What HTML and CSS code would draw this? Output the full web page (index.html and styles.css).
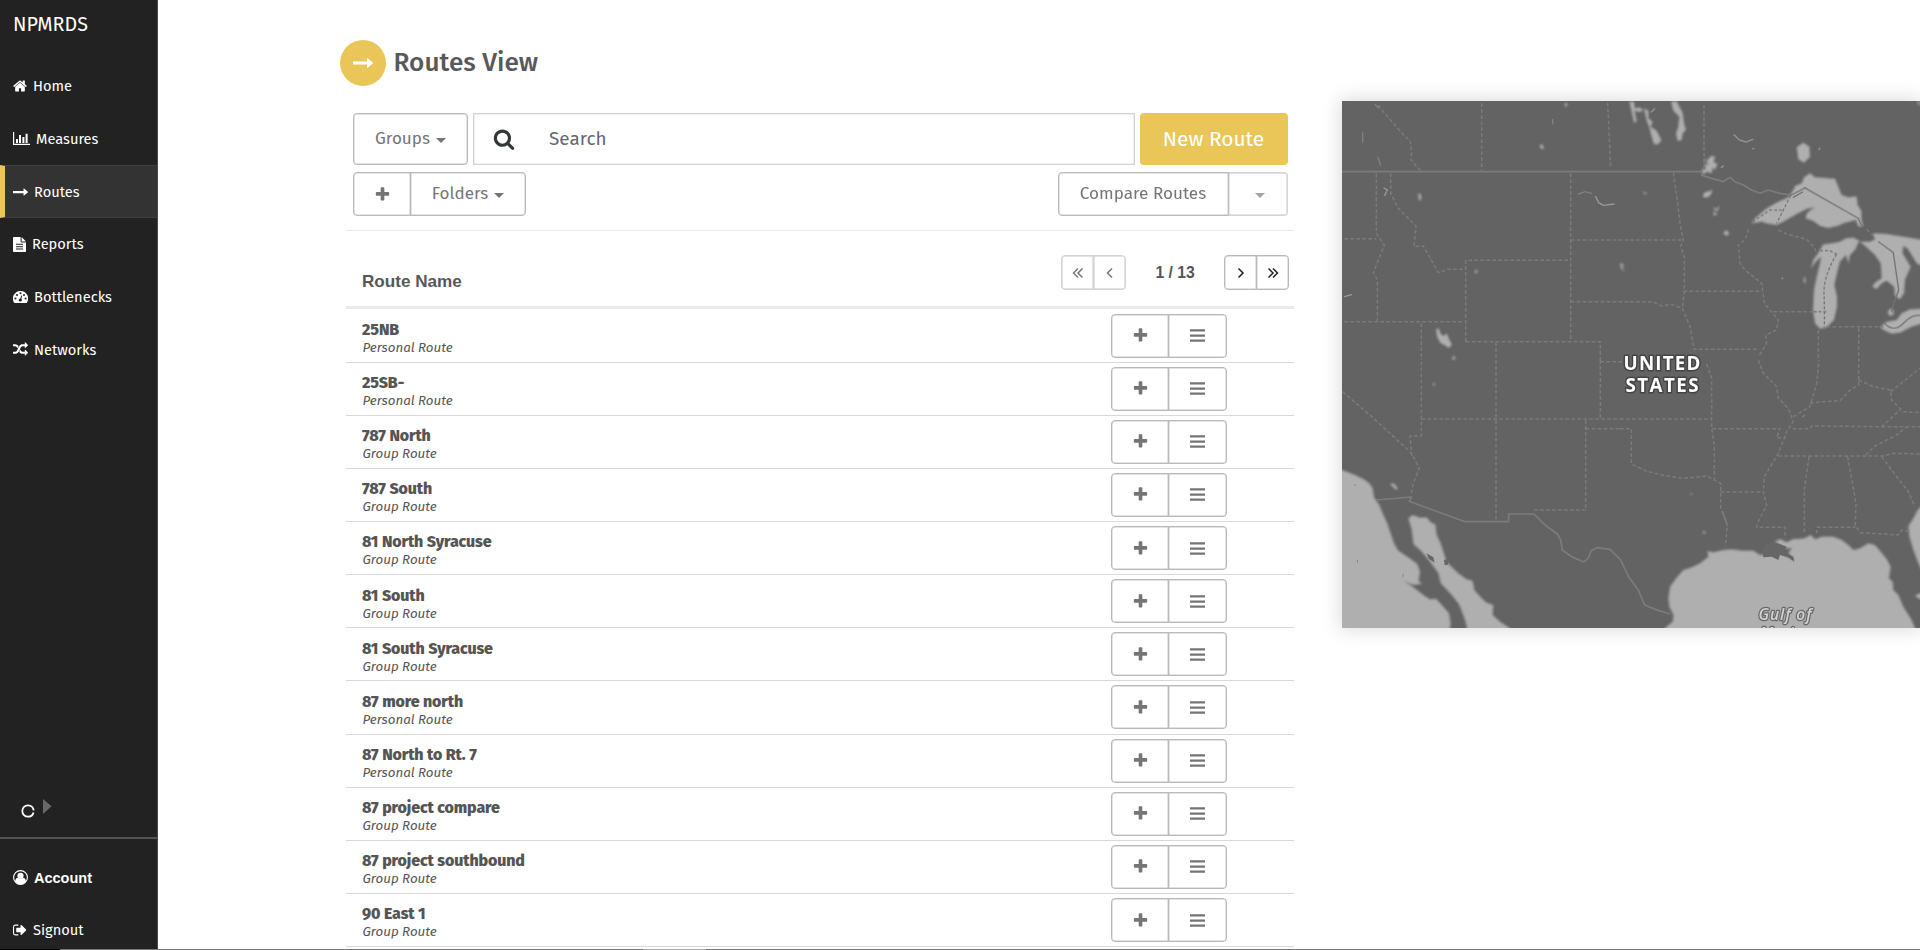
FILE: index.html
```html
<!DOCTYPE html>
<html lang="en">
<head>
<meta charset="utf-8">
<title>NPMRDS – Routes View</title>
<link rel="stylesheet" href="styles.css">
</head>
<body>
<svg class="defs" width="0" height="0">
  <symbol id="plus" viewBox="0 0 1792 1792"><path d="M1600 736v192q0 40-28 68t-68 28h-416v416q0 40-28 68t-68 28h-192q-40 0-68-28t-28-68v-416h-416q-40 0-68-28t-28-68v-192q0-40 28-68t68-28h416v-416q0-40 28-68t68-28h192q40 0 68 28t28 68v416h416q40 0 68 28t28 68z"/></symbol>
  <symbol id="bars" viewBox="0 0 15 13"><path d="M0 .2h15v2.3H0zM0 5.4h15v2.3H0zM0 10.5h15v2.3H0z"/></symbol>
  <symbol id="arrow" viewBox="0 0 20 10"><path d="M0 3.500h14V.7q0-.9.8-.4l5 4.2q.4.5 0 1l-5 4.2q-.8.5-.8-.4V6.500H0z"/></symbol>
</svg>
<div class="app">
  <nav class="sidebar">
    <div class="brand">NPMRDS</div>
    <a class="item"><svg width="14" height="14" viewBox="64 64 1664 1664"><path d="M1472 992v480q0 26-19 45t-45 19h-384v-384h-256v384h-384q-26 0-45-19t-19-45v-480q0-1 .5-3t.5-3l575-474 575 474q1 2 1 6zm223-69l-62 74q-8 9-21 11h-3q-13 0-21-7l-692-577-692 577q-12 8-24 7-13-2-21-11l-62-74q-8-10-7-23.500t11-21.500l719-599q32-26 76-26t76 26l244 204v-195q0-14 9-23t23-9h192q14 0 23 9t9 23v408l219 182q10 8 11 21.500t-7 23.500z"/></svg><span>Home</span></a>
    <a class="item"><svg width="17" height="13" viewBox="0 0 17 13"><path d="M0 0h1.2v11.8H17V13H0zM3 7h2v4H3zM6 3h2v8H6zM9.400 5h2v6h-2zM12.600 1.800h2V11h-2z"/></svg><span>Measures</span></a>
    <a class="item active"><svg width="15" height="8" viewBox="0 0 20 10"><use href="#arrow"/></svg><span>Routes</span></a>
    <a class="item"><svg width="13" height="15" viewBox="0 0 13 15"><path fill-rule="evenodd" d="M0 .8Q0 0 .8 0H7.600V4.600Q7.600 5.400 8.400 5.400H13V14.200q0 .8-.8.8H.8q-.8 0-.8-.8zM3 6.800h7v1H3zM3 9.200h7v1H3zM3 11.600h7v1H3zM8.600 0l4.400 4.400H8.600z"/></svg><span>Reports</span></a>
    <a class="item"><svg width="15" height="12" viewBox="0 0 15 12"><path d="M7.500 0A7.500 7.500 0 0 0 1 11.400q.3.600 1 .600h11q.7 0 1-.600A7.500 7.500 0 0 0 7.500 0z"/><g fill="#222"><circle cx="2.400" cy="7.500" r="1"/><circle cx="4" cy="3.900" r="1"/><circle cx="7.500" cy="2.300" r="1"/><circle cx="11" cy="3.900" r="1"/><circle cx="12.600" cy="7.500" r="1"/><circle cx="7.300" cy="9" r="1.600"/><path d="M8.300 4.400l.9.200L8 9 6.900 8.700z"/></g></svg><span>Bottlenecks</span></a>
    <a class="item"><svg width="15" height="15" viewBox="0 0 1792 1792"><path d="M666 481q-60 92-137 273-22-45-37-72.500t-40.500-63.500-51-56.500-63-35-81.500-14.500h-224q-14 0-23-9t-9-23v-192q0-14 9-23t23-9h224q250 0 410 225zm1126 799q0 14-9 23l-320 320q-9 9-23 9-13 0-22.500-9.500t-9.500-22.500v-192q-32 0-85 .5t-81 1-73-1-71-5-64-10.500-63-18.500-58-28.500-59-40-55-53.500-56-69.500q59-93 136-273 22 45 37 72.500t40.500 63.500 51 56.500 63 35 81.500 14.500h256v-192q0-14 9-23t23-9q12 0 24 10l319 319q9 9 9 23zm0-896q0 14-9 23l-320 320q-9 9-23 9-13 0-22.500-9.500t-9.500-22.500v-192h-256q-48 0-87 15t-69 45-51 61.500-45 77.500q-32 62-78 171-29 66-49.500 111t-54 105-64 100-74 83-90 68.500-106.500 42-128 16.500h-224q-14 0-23-9t-9-23v-192q0-14 9-23t23-9h224q48 0 87-15t69-45 51-61.500 45-77.500q32-62 78-171 29-66 49.500-111t54-105 64-100 74-83 90-68.500 106.500-42 128-16.500h256v-192q0-14 9-23t23-9q12 0 24 10l319 319q9 9 9 23z"/></svg><span>Networks</span></a>
    <div class="side-foot">
      <div class="loader"><svg width="32" height="22" viewBox="0 0 32 22"><circle cx="7" cy="14" r="5.700" fill="none" stroke="#fff" stroke-width="1.800" stroke-dasharray="32.800 3" stroke-dashoffset="-1.500"/><path fill="#686868" d="M22 2l8.500 7.300L22 17z"/></svg></div>
      <a class="item account"><svg width="15" height="15" viewBox="0 0 15 15"><circle cx="7.500" cy="7.500" r="6.900" fill="none" stroke="#fff" stroke-width="1.100"/><circle cx="7.500" cy="5.800" r="3.100"/><path d="M2 11.500Q2.500 8 4.800 7.800q2.700 2.300 5.400 0Q12.500 8 13 11.500 10.800 14.600 7.500 14.600T2 11.500z"/></svg><span>Account</span></a>
      <a class="item"><svg width="14" height="14" viewBox="64 64 1664 1664"><path d="M704 1440q0 4 1 20t.5 26.500-3 23.500-10 19.500-20.500 6.500h-320q-119 0-203.500-84.500t-84.500-203.500v-704q0-119 84.500-203.500t203.500-84.500h320q13 0 22.500 9.500t9.500 22.500q0 4 1 20t.5 26.500-3 23.500-10 19.500-20.500 6.500h-320q-66 0-113 47t-47 113v704q0 66 47 113t113 47h312l11.500 1 11.500 3 8 5.500 7 9 2 13.500zm928-544q0 26-19 45l-544 544q-19 19-45 19t-45-19-19-45v-288h-448q-26 0-45-19t-19-45v-384q0-26 19-45t45-19h448v-288q0-26 19-45t45-19 45 19l544 544q19 19 19 45z"/></svg><span>Signout</span></a>
    </div>
  </nav>

  <main class="content">
    <header class="title"><span class="badge"><svg width="20" height="10"><use href="#arrow"/></svg></span><h1>Routes View</h1></header>
    <div class="tools">
      <div class="tool-row first">
        <button class="btn groups"><span>Groups</span><i class="caret"></i></button>
        <div class="search"><svg width="22" height="22" viewBox="0 0 1792 1792"><path d="M1216 832q0-185-131.500-316.500t-316.500-131.500-316.500 131.500-131.500 316.500 131.500 316.500 316.500 131.500 316.500-131.500 131.500-316.500zm512 832q0 52-38 90t-90 38q-54 0-90-38l-343-342q-179 124-399 124-143 0-273.500-55.500t-225-150-150-225-55.500-273.500 55.500-273.500 150-225 225-150 273.500-55.500 273.500 55.500 225 150 150 225 55.500 273.500q0 220-124 399l343 343q37 37 37 90z"/></svg><span>Search</span></div>
        <button class="new"><span>New Route</span></button>
      </div>
      <div class="tool-row second">
        <div class="group"><button class="btn add"><svg width="17" height="17"><use href="#plus"/></svg></button><button class="btn folders"><span>Folders</span><i class="caret"></i></button></div>
        <div class="group"><button class="btn compare"><span>Compare Routes</span></button><button class="btn drop"><i class="caret"></i></button></div>
      </div>
    </div>
    <div class="thead">
      <span class="col">Route Name</span>
      <div class="pager">
        <div class="group faded"><button class="btn pg"><svg width="12" height="12" viewBox="0 0 12 12"><path d="M6 1.500L1.500 6 6 10.500M10.500 1.500L6 6 10.500 10.500"/></svg></button><button class="btn pg"><svg width="12" height="12" viewBox="0 0 12 12"><path d="M8 1.500L3.500 6 8 10.500"/></svg></button></div>
        <span class="page">1 / 13</span>
        <div class="group"><button class="btn pg"><svg width="12" height="12" viewBox="0 0 12 12"><path d="M3.500 1.500L8 6 3.500 10.500"/></svg></button><button class="btn pg"><svg width="12" height="12" viewBox="0 0 12 12"><path d="M1.500 1.500L6 6 1.500 10.500M6 1.500L10.500 6 6 10.500"/></svg></button></div>
      </div>
    </div>
    <ul class="rows" id="rows"></ul>
  </main>

  <aside class="map">
    <svg width="578" height="527" viewBox="1342 101 578 527">
      <rect x="1342" y="101" width="578" height="527" fill="#636363"/>
      <defs><filter id="soft" x="-5%" y="-5%" width="110%" height="110%"><feGaussianBlur stdDeviation=".9"/></filter></defs>
      <!-- water -->
      <g fill="#afafaf" stroke="#858585" stroke-width="2" stroke-linejoin="round" filter="url(#soft)">
        <g transform="translate(1620 90) scale(.33333)">
          <path d="M395 400L405 385 440 355 475 335 505 322 520 300 525 288 545 280 552 262 570 250 585 262 645 266 655 290 665 315 685 322 710 319 713 345 724 362 725 390 730 408 715 410 708 390 670 400 655 407 625 414 600 408 580 393 557 385 560 370 583 352 560 357 530 372 490 395 470 405 445 401 425 395z"/>
          <path d="M573 534L580 510 597 485 610 463 635 460 660 455 678 445 700 443 718 452 705 480 690 495 685 520 678 495 660 515 652 545 643 585 651 620 651 650 642 690 620 712 600 716 585 700 579 660 582 600 590 560 600 520 603 500 590 512z"/>
          <path d="M720 455L750 455 765 448 758 430 800 432 850 440 910 450V530L890 520 875 495 862 475 850 468 848 490 872 530 855 570 852 610 840 628 825 618 822 590 800 572 785 580 770 597 757 590 765 578 785 565 782 520 765 495 740 472z"/>
          <path d="M780 712L800 695 830 690 845 670 870 658 910 656V700L875 710 840 728 815 731 795 722z"/>
          <path d="M803 665L812 655 822 662 820 675 808 678z"/>
          <path d="M530 172L550 158 568 170 570 200 552 218 535 208z"/>
          <path d="M72 55L85 62 85 85 98 95 92 110 110 122 124 150 116 162 102 163 95 140 88 112 80 92z"/>
          <path d="M153 35L170 33 178 50 188 68 192 100 198 120 188 130 185 150 173 153 168 130 175 110 178 80 160 62z"/>
          <path d="M28 35L42 35 45 55 60 52 70 62 58 66 44 62 50 95 42 98 36 70z"/>
          <path d="M252 205L262 212 272 198 286 200 280 215 292 222 285 240 278 232 275 250 262 245 248 254 245 238 258 238 252 222 266 224z"/>
          <path d="M248 320L252 308 278 300 270 318 258 323zM310 428L320 420 328 432 318 438zM279 350L288 358 298 347 294 362 284 362zM279 368l10-1 1 8-9 1zM552 560l5 4-1 16-5-4zM890 35L900 35V48zM68 306l12 2-4 6z"/>
          <path d="M0 520L10 522 6 530 12 545z"/>
        </g>
        <g transform="translate(1330 90) scale(.33333)">
          <path d="M318 718L326 715 332 732 342 738 350 730 356 745 366 765 355 774 345 766 332 760 322 742zM365 808L372 796 377 808zM264 312L271 310 275 325 268 334zM628 167L636 163 643 175 634 177zM434 542l6-3 3 8-6 4zM703 42l8-4 2 8-7 4zM870 522l10 0-2 10 4 12-8-8z"/>
        </g>
        <g transform="translate(1330 360) scale(.33333)">
          <path d="M20 325L50 335 75 345 100 357 118 370 128 385 132 412 148 435 158 460 172 490 182 520 192 550 205 572 235 592 262 612 270 635 266 662 275 672 250 675 225 665 248 680 280 705 300 718 318 716 340 740 357 760 362 790 355 840H20z"/>
          <path d="M235 475L248 465 270 473 290 472 302 487 316 493 320 525 332 550 345 590 352 608 385 640 410 658 428 662 433 690 455 715 470 728 490 735 488 765 510 785 555 815 600 840H420L405 780 388 735 365 705 332 670 325 640 300 605 275 575 250 552 245 510z"/>
          <path d="M180 372L192 370 203 385 198 390zM308 70l7 0 0 6-6 0z"/>
        </g>
        <g transform="translate(1620 360) scale(.33333)">
          <path d="M120 840L135 804 158 785 160 765 148 740 145 715 150 680 168 655 190 630 215 622 240 610 265 590 262 573 280 577 310 570 335 568 370 572 400 572 420 585 450 580 480 578 520 600 505 578 515 565 490 565 465 545 480 537 500 547 520 537 550 536 573 525 585 538 605 530 640 530 665 540 685 555 700 570 720 565 745 550 765 555 782 575 800 597 812 620 807 655 818 665 820 690 835 705 850 740 875 780 900 840z"/>
          <path d="M910 432L893 450 880 475 865 498 868 530 880 570 895 610 910 640zM885 708l12-8 10 2v20z"/>
          <path d="M248 515l5-3 4 8-6 2zM208 400l10 0-2 4z"/>
        </g>
      </g>
      <g fill="#666">
        <path transform="translate(1330 360) scale(.33333)" d="M290 580l20 12 4 16-18-12zM342 600l12-4 0 18-10 2zM218 645l3-5-2 14zM80 598l4 6-1 6zM72 373l5 2-1 4zM366 715l16 16-2 6z"/>
        <path transform="translate(1620 360) scale(.33333)" d="M425 565L450 545 480 552 500 560 492 575 520 590 523 605 505 592 480 585 475 600 455 590 430 592z"/>
      </g>
      <!-- rivers and small lakes -->
      <g fill="none" stroke="#808080" stroke-width="4" stroke-linecap="round">
        <path transform="translate(1330 90) scale(.33333)" d="M745 312L765 305 785 310M98 128v30M144 202l8 24M668 88v14M136 44l10 10"/>
        <path transform="translate(1330 90) scale(.33333)" stroke="#999" d="M797 320L806 338 820 346 852 342M162 294l10 6-8 16M43 620l22-6"/>
        <path transform="translate(1620 90) scale(.33333)" stroke="#959595" d="M342 134L358 150 378 156 398 148M94 66l10-10M600 174l-3 5M398 176h4M486 564l2 2M310 228l-6 4"/>
        <path transform="translate(1620 90) scale(.33333)" stroke="#707070" d="M520 322l28-16"/>
        <path transform="translate(1620 360) scale(.33333)" d="M308 455L322 495M548 170l6-4"/>
      </g>
      <!-- national borders -->
      <g fill="none" stroke="#7c7c7c" stroke-width="5" stroke-linejoin="round">
        <path transform="translate(1330 90) scale(.33333)" d="M36 245H1115L1116 256 1145 265 1180 275 1200 262 1215 275 1240 285 1265 300 1290 310 1315 300 1350 310 1385 315"/>
        <path transform="translate(1330 360) scale(.33333)" d="M138 420L245 411 237 424 405 485H536V462H612L645 495 682 522 692 540 697 570 725 590 762 606 776 593 783 572 800 563 840 568 872 600 897 652 925 690 944 735 975 748 1020 762"/>
      </g>
      <g fill="none" stroke="#737373" stroke-width="4" stroke-linejoin="round" transform="translate(1620 90) scale(.33333)">
        <path d="M512 316L555 294 715 385 726 410M775 455L820 488 836 600 818 650 815 668M790 695Q820 732 850 700T910 678"/>
        <path stroke-dasharray="9 6" d="M398 395L450 360H485M512 316L470 400M650 492Q610 560 612 610T613 712M600 482L630 482 652 494M580 665H620"/>
      </g>
      <!-- state and province borders -->
      <g fill="none" stroke="#7b7b7b" stroke-width="4.500" stroke-dasharray="11 7" stroke-linejoin="round">
        <path transform="translate(1330 90) scale(.33333)" d="M145 45L160 65 225 140 240 150 245 185 243 210 272 242M455 40V243M833 38L842 235M139 250V430L163 465 130 548 142 570V695M43 446H139M182 250V310L205 355 258 408 252 470 280 468 325 548 352 538H407M407 755V511H722M722 250V755M407 755H811V810M722 450H900M722 635H900M43 695H400M274 700V810M498 757V810"/>
        <path transform="translate(1620 90) scale(.33333)" d="M252 45V240M160 248L172 330 180 400 190 450 182 470 193 500V605L187 655M30 450H190M30 635H98L125 648 155 643 187 655 210 710 222 778H410M190 604H425M385 418L375 450 355 465 360 520 375 540 425 580 433 640 475 690 470 720 437 735 440 760 415 800M460 665H590M475 420L500 432 560 448 585 475 590 495M620 710H790M595 720V810M716 715V810M740 418L755 435"/>
        <path transform="translate(1330 360) scale(.33333)" d="M38 95L125 170 245 280 268 325 250 370 243 405M274 5V228H240L246 290M274 177H870M498 0V485M811 0V177M811 5H880M767 180V450H608M767 206H870"/>
        <path transform="translate(1620 360) scale(.33333)" d="M0 177H277M0 206H34V312L75 332 125 345 190 355 260 348 302 370V445L322 495 316 560M260 12L275 55V205L283 260V358M277 206H480L470 233H498M302 396H430M415 0L430 40 470 80 475 115 505 145 520 185 500 215 475 280 433 350 430 395 440 435 412 490 410 502H495V535M520 170L570 140 590 70 597 0M570 130L610 125 660 122 690 90 716 75V0M716 60L760 80 812 90 815 120 850 155 900 158M812 95L850 65 900 25M518 206H570L575 198 785 200 840 150M785 200H900M475 288H790L820 280 900 282M737 285L765 258 830 225 858 202M567 290L553 390V520M683 290L708 430 706 495 720 518 835 525 845 510 870 514M590 520V502H706M785 290L830 350 865 395 885 440"/>
      </g>
      <g class="map-label">
        <text x="1662" y="369.500" text-anchor="middle" textLength="77">UNITED</text>
        <text x="1662" y="391.500" text-anchor="middle" textLength="73">STATES</text>
      </g>
      <g class="map-water"><text x="1758.500" y="620" textLength="53">Gulf of</text><text x="1760" y="638.500" textLength="50">Mexico</text></g>
    </svg>
  </aside>
</div>
<div class="statusbar"></div>
<script src="rows.js"></script>
</body>
</html>
```

FILE: rows.js
```js
const routes = [
  ["25NB", "Personal Route"], ["25SB-", "Personal Route"], ["787 North", "Group Route"],
  ["787 South", "Group Route"], ["81 North Syracuse", "Group Route"], ["81 South", "Group Route"],
  ["81 South Syracuse", "Group Route"], ["87 more north", "Personal Route"],
  ["87 North to Rt. 7", "Personal Route"], ["87 project compare", "Group Route"],
  ["87 project southbound", "Group Route"], ["90 East 1", "Group Route"]
];
document.getElementById("rows").innerHTML = routes.map(([name, kind]) =>
  `<li class="row"><div class="info"><b>${name}</b><em>${kind}</em></div>
   <div class="group"><button class="btn act"><svg width="17" height="17"><use href="#plus"/></svg></button><button class="btn act"><svg width="15" height="13"><use href="#bars"/></svg></button></div></li>`
).join("");
```

FILE: styles.css
```css
* { box-sizing: border-box; }
body { margin: 0; width: 1920px; height: 950px; overflow: hidden; background: #fff; font-family: "Fira Sans", "Noto Sans", sans-serif; color: #555; }
.defs { display: block; position: absolute; }
svg { display: block; flex: none; }
button { font: inherit; margin: 0; padding: 0; }
.app { display: flex; height: 950px; }

.sidebar { width: 158px; height: 950px; flex: none; background: #222; border-right: 1px solid #4a4a4a; color: #fff; fill: #fff; display: flex; flex-direction: column; }
.brand { height: 60px; padding: 10px 0 0 13px; font-size: 19.700px; line-height: 30px; }
.item { display: flex; align-items: center; height: 52.670px; padding-left: 12.500px; gap: 6.500px; font-size: 14.650px; font-weight: 400; }
.item.active { background: #333; border-left: 5px solid #eac659; border-top: 1px solid #3f3f3f; border-bottom: 1px solid #3f3f3f; padding-left: 7.500px; }
.side-foot { margin-top: auto; height: 154px; }
.loader { height: 43px; border-bottom: 2px solid #545454; padding: 1px 0 0 21px; margin-bottom: 12.500px; }
.account span { font: bold 14.500px "Liberation Sans", Arial, sans-serif; }

.content { width: 948px; margin-left: 188px; flex: none; }
.title { display: flex; align-items: center; gap: 7.500px; height: 46px; margin: 40px 0 0 -6px; }
.badge { width: 46px; height: 46px; border-radius: 50%; background: #eac659; fill: #fff; display: flex; align-items: center; justify-content: center; }
h1 { margin: 0; font-size: 26.200px; font-weight: 500; line-height: 40px; color: #58595a; }

.tools { height: 145px; border-bottom: 1px solid #ebebeb; padding: 27px 6.500px 0 7px; }
.tool-row { display: flex; }
.first { gap: 5px; height: 52px; }
.second { justify-content: space-between; margin-top: 7px; }
.btn { display: flex; align-items: center; justify-content: center; background: #fff; border: 1px solid #bababa; box-shadow: inset 0 0 0 .5px #c8c8c8; border-radius: 4px; color: #757575; fill: #757575; font-size: 17.100px; }
.btn span { position: relative; top: -.500px; }
.caret { width: 0; height: 0; border: 5px solid transparent; border-top-color: #757575; border-bottom: 0; margin: 3px 0 0 6px; }
.groups { width: 115px; height: 52px; }
.search { flex: 1; border: 1px solid #d0d3d3; box-shadow: inset 0 0 0 .5px #e3e3e3; display: flex; align-items: center; padding-left: 19px; gap: 34px; fill: #333839; color: #65696c; font-size: 18.900px; }
.search span { position: relative; top: -.500px; }
.new { width: 148px; height: 52px; border: 0; border-radius: 4px; background: #eac659; color: #fff; font-size: 20.900px; }
.group { display: flex; }
.group .btn + .btn { margin-left: -1px; border-top-left-radius: 0; border-bottom-left-radius: 0; }
.group .btn:first-child { border-top-right-radius: 0; border-bottom-right-radius: 0; }
.second .btn { height: 44px; }
.add { width: 58px; }
.folders { width: 116px; }
.compare { width: 171px; }
.drop { width: 60px; border-color: #d4d4d4; border-left-color: #bfbfbf; }
.drop .caret { margin-left: 5px; opacity: .65; }

.thead { height: 78px; border-bottom: 3px solid #e9ebeb; display: flex; justify-content: space-between; padding: 24px 5px 0 16px; }
.col { font: bold 17.100px "Liberation Sans", Arial, sans-serif; margin-top: 17px; color: #585858; }
.pager { display: flex; }
.pg { width: 33px; height: 35px; }
.pg svg { fill: none; stroke: #222; stroke-width: 1.500; }
.faded .btn { border-color: #d4d4d4; }
.faded svg { stroke: #777; }
.page { width: 98px; text-align: center; font: bold 15.700px/36px "Liberation Sans", Arial, sans-serif; }

.rows { list-style: none; margin: 0; padding: .500px 0 0; }
.row { height: 53.150px; border-bottom: 1px solid #d9d9d9; display: flex; justify-content: space-between; padding: 4px 67px 0 16px; }
.info { display: flex; flex-direction: column; padding-top: 6.300px; }
.info b { font-size: 16px; line-height: 20px; font-weight: 800; letter-spacing: -.1px; color: #555; }
.info em { font-size: 13.350px; line-height: 16px; padding-left: .5px; }
.act { width: 58px; height: 44px; }
.act + .act { width: 59px; }

.map { margin: 101px 0 0 48px; width: 578px; height: 527px; box-shadow: 0 0 18px 2px rgba(0,0,0,.14); }
.map-label text { font: 700 18.800px "Open Sans", "Noto Sans", sans-serif; fill: #fff; stroke: #444; stroke-width: 3px; paint-order: stroke; stroke-linejoin: round; }
.map-water text { font: italic 600 15.500px "Open Sans", "Noto Sans", sans-serif; fill: #d2d2d2; stroke: #6a6a6a; stroke-width: 2.500px; paint-order: stroke; stroke-linejoin: round; }
.statusbar { position: absolute; left: 0; top: 949px; width: 1920px; height: 1px; background: linear-gradient(90deg, #000 60px, #777 60px 643px, #aaa 643px 706px, #777 706px); }
```
